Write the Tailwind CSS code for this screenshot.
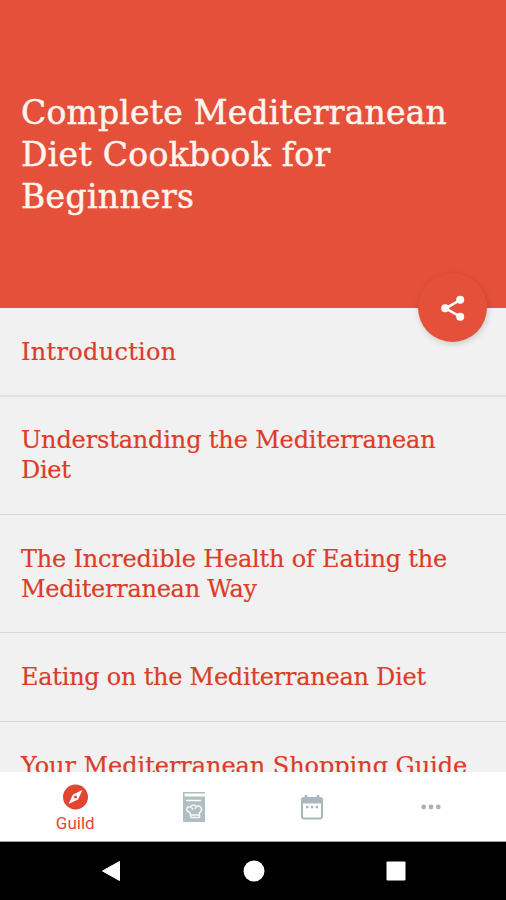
<!DOCTYPE html>
<html lang="en">
<head>
<meta charset="utf-8">
<title>Mediterranean Diet Cookbook</title>
<script src="https://cdn.jsdelivr.net/npm/@tailwindcss/browser@4"></script>
</head>
<body class="w-[506px] h-[900px] overflow-hidden flex flex-col bg-[#f1f1f1] font-['DejaVu_Serif',serif]">
<header class="relative h-[308px] shrink-0 bg-[#e5503a] text-[#fff4ee] pl-[21px] pt-[92px]">
  <h1 class="text-[33px] leading-[42px] whitespace-nowrap [-webkit-text-stroke:0.5px_#fff4ee]">
    <span class="block tracking-[0.2px]">Complete Mediterranean</span>
    <span class="block tracking-[0.300px]">Diet Cookbook for</span>
    <span class="block tracking-[0.350px]">Beginners</span>
  </h1>
  <button aria-label="Share" class="absolute left-[418px] top-[273px] size-[69px] rounded-full bg-[#e5503a] shadow-[1px_2px_6px_rgba(0,0,0,0.16)] flex items-center justify-center">
    <svg class="size-[30px]" viewBox="0 0 30 30" fill="#fff" stroke="#fff"><path d="M22.500 6.800 7.500 15.300 22.500 23.800" fill="none" stroke-width="2.500"/><g stroke="none"><circle cx="22.200" cy="6.800" r="4"/><circle cx="7.200" cy="15.300" r="4"/><circle cx="22.200" cy="23.800" r="4"/></g></svg>
  </button>
</header>
<main class="h-[464px] shrink-0 overflow-hidden text-[#dc3c28] text-[24px] leading-[30px] whitespace-nowrap [-webkit-text-stroke:0.2px_#dc3c28]">
  <div class="h-[89px] pl-[21px] pt-[29px] border-b-2 border-[#e2e2e2]"><span class="block tracking-[0.300px]">Introduction</span></div>
  <div class="h-[118px] pl-[21px] pt-[28px] border-b border-[#d9d9d9]"><span class="block tracking-[-0.150px]">Understanding the Mediterranean</span><span class="block tracking-[-0.300px]">Diet</span></div>
  <div class="h-[118px] pl-[21px] pt-[29px] border-b border-[#d9d9d9]"><span class="block tracking-[-0.200px]">The Incredible Health of Eating the</span><span class="block tracking-[-0.270px]">Mediterranean Way</span></div>
  <div class="h-[89px] pl-[21px] pt-[29px] border-b border-[#d9d9d9]"><span class="block tracking-[-0.250px]">Eating on the Mediterranean Diet</span></div>
  <div class="h-[89px] pl-[21px] pt-[29px]"><span class="block tracking-[-0.050px]">Your Mediterranean Shopping Guide</span></div>
</main>
<nav class="h-[70px] shrink-0 bg-white border-b border-[#a0a0a0] flex px-[16px] text-[#b0bec5]">
  <a class="w-[118.500px] flex flex-col items-center pt-[12px] text-[#e14631]">
    <svg class="size-[26px]" viewBox="0 0 26 26"><circle cx="13.500" cy="13" r="12.500" fill="currentColor"/><path d="M20.500 6 16 15.500 6.500 20 11 10.500Z" fill="#fff"/><circle cx="13.500" cy="13" r="1.500" fill="currentColor"/></svg>
    <span class="font-['Roboto',sans-serif] text-[17px] leading-[20px] mt-[3px]">Guild</span>
  </a>
  <a class="w-[118.500px] flex justify-center pt-[19px]">
    <svg class="w-[24px] h-[32px]" viewBox="0 0 24 32"><path d="M1 1H23V31H1Z" fill="#b0bdc1"/><path d="M2.500 2.500H23V5.500H2.500Z" fill="#fff"/><path d="M4 9.500H19" stroke="#fff" stroke-width="1.500"/><path d="M8 21.500C3 20 4.500 14.500 8.500 16C9.500 13.500 13 13.500 14 15.500C19 13.500 21.500 19 17.500 21.500V26.500H9L8 21.500ZM9 24H17M9.500 16.500 11 18.500M14 16 13 18" fill="none" stroke="#f5f8f8" stroke-width="1.500"/></svg>
  </a>
  <a class="w-[118.500px] flex justify-center pt-[22px]">
    <svg class="w-[24px] h-[27px]" viewBox="0 0 24 27"><path d="M6 1V6M18 1V6" stroke="#aab6ba" stroke-width="2.500"/><rect x="2" y="4" width="20" height="20.500" rx="2" fill="#fff" stroke="#aab6ba" stroke-width="2"/><path d="M2 4H22V9.500H2Z" fill="#aab6ba"/><path d="M6 13h2.500M10.800 13h2.500M15.600 13h2.500" stroke="#aab6ba" stroke-width="2.500"/></svg>
  </a>
  <a class="w-[118.500px] flex justify-center pt-[32px]">
    <svg class="w-[20px] h-[6px]" viewBox="0 0 20 6" fill="#a9b2b5"><circle cx="2.700" cy="3" r="2.400"/><circle cx="10" cy="3" r="2.400"/><circle cx="17.300" cy="3" r="2.400"/></svg>
  </a>
</nav>
<footer class="h-[58px] bg-black flex items-center justify-between pl-[101px] pr-[100px]">
  <svg class="w-[20px] h-[22px]" viewBox="0 0 20 22"><path d="M1.500 11 18.500 1.500V20.500Z" fill="#fff" stroke="#fff" stroke-linejoin="round"/></svg>
  <svg class="size-[22px]" viewBox="0 0 22 22"><circle cx="11" cy="11" r="10.500" fill="#fff"/></svg>
  <svg class="size-[20px]" viewBox="0 0 20 20"><rect x=".5" y=".5" width="19" height="19" rx="1" fill="#fff"/></svg>
</footer>
</body>
</html>
